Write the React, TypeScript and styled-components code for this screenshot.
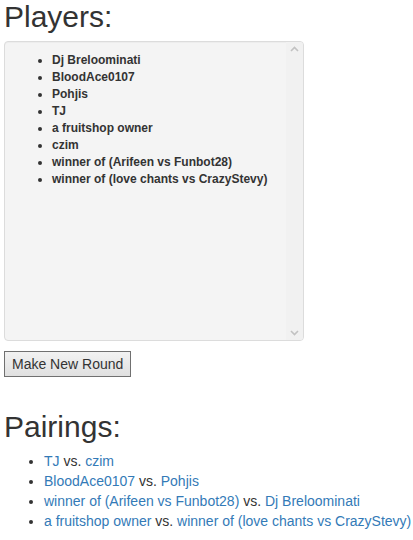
import React from "react";
import styled, { createGlobalStyle } from "styled-components";

const Global = createGlobalStyle`
  html, body { margin: 0; padding: 0; background: #fff; }
  body {
    font-family: "Liberation Sans", Arial, Helvetica, sans-serif;
    font-size: 14px;
    line-height: 1.42857143;
    color: #333;
  }
`;

const Page = styled.div`
  padding: 0 0 0 4px;
`;

const Heading = styled.h2<{ $top?: number }>`
  font-family: "Liberation Sans", Arial, sans-serif;
  font-weight: 400;
  font-size: 30px;
  line-height: 1.1;
  margin: ${(p) => p.$top ?? 0}px 0 8px;
  color: #333;
`;

const Well = styled.div`
  width: 300px;
  height: 300px;
  box-sizing: border-box;
  border: 1px solid #dcdcdc;
  border-radius: 4px;
  background: #f4f4f4;
  display: flex;
  overflow: hidden;
  box-shadow: inset 0 1px 1px rgba(0, 0, 0, 0.03);
`;

const WellContent = styled.div`
  flex: 1;
  padding: 10px 0 0 7px;
`;

const Scrollbar = styled.div`
  width: 17px;
  background: #f1f1f1;
  display: flex;
  flex-direction: column;
  justify-content: space-between;
  align-items: center;
  padding: 4px 0;
`;

const PlayerList = styled.ul`
  margin: 0;
  padding-left: 40px;
  font-size: 12px;
  font-weight: 700;
  line-height: 17px;
  color: #333;
`;

const Button = styled.button`
  margin: 10px 0 0;
  font-family: "Liberation Sans", Arial, sans-serif;
  font-size: 14px;
  line-height: 20px;
  padding: 2px 7px;
  color: #333;
  background: linear-gradient(#f2f2f2, #e0e0e0);
  border: 1px solid #707070;
  border-radius: 0;
`;

const PairList = styled.ul`
  margin: 0;
  padding-left: 40px;
  line-height: 20px;
  white-space: nowrap;
`;

const Link = styled.a`
  color: #337ab7;
  text-decoration: none;
`;

const Arrow = ({ up }: { up?: boolean }) => (
  <svg width="9" height="6" viewBox="0 0 9 6">
    <path
      d={up ? "M1 5 L4.5 1.5 L8 5" : "M1 1 L4.5 4.5 L8 1"}
      fill="none"
      stroke="#c2c2c2"
      strokeWidth="1.6"
    />
  </svg>
);

const players = [
  "Dj Breloominati",
  "BloodAce0107",
  "Pohjis",
  "TJ",
  "a fruitshop owner",
  "czim",
  "winner of (Arifeen vs Funbot28)",
  "winner of (love chants vs CrazyStevy)",
];

const pairings: [string, string][] = [
  ["TJ", "czim"],
  ["BloodAce0107", "Pohjis"],
  ["winner of (Arifeen vs Funbot28)", "Dj Breloominati"],
  ["a fruitshop owner", "winner of (love chants vs CrazyStevy)"],
];

export default function App() {
  return (
    <Page>
      <Global />
      <Heading>Players:</Heading>
      <Well>
        <WellContent>
          <PlayerList>
            {players.map((p) => (
              <li key={p}>{p}</li>
            ))}
          </PlayerList>
        </WellContent>
        <Scrollbar>
          <Arrow up />
          <Arrow />
        </Scrollbar>
      </Well>
      <Button>Make New Round</Button>
      <Heading $top={33}>Pairings:</Heading>
      <PairList>
        {pairings.map(([a, b]) => (
          <li key={a + b}>
            <Link href="#">{a}</Link> vs. <Link href="#">{b}</Link>
          </li>
        ))}
      </PairList>
    </Page>
  );
}
